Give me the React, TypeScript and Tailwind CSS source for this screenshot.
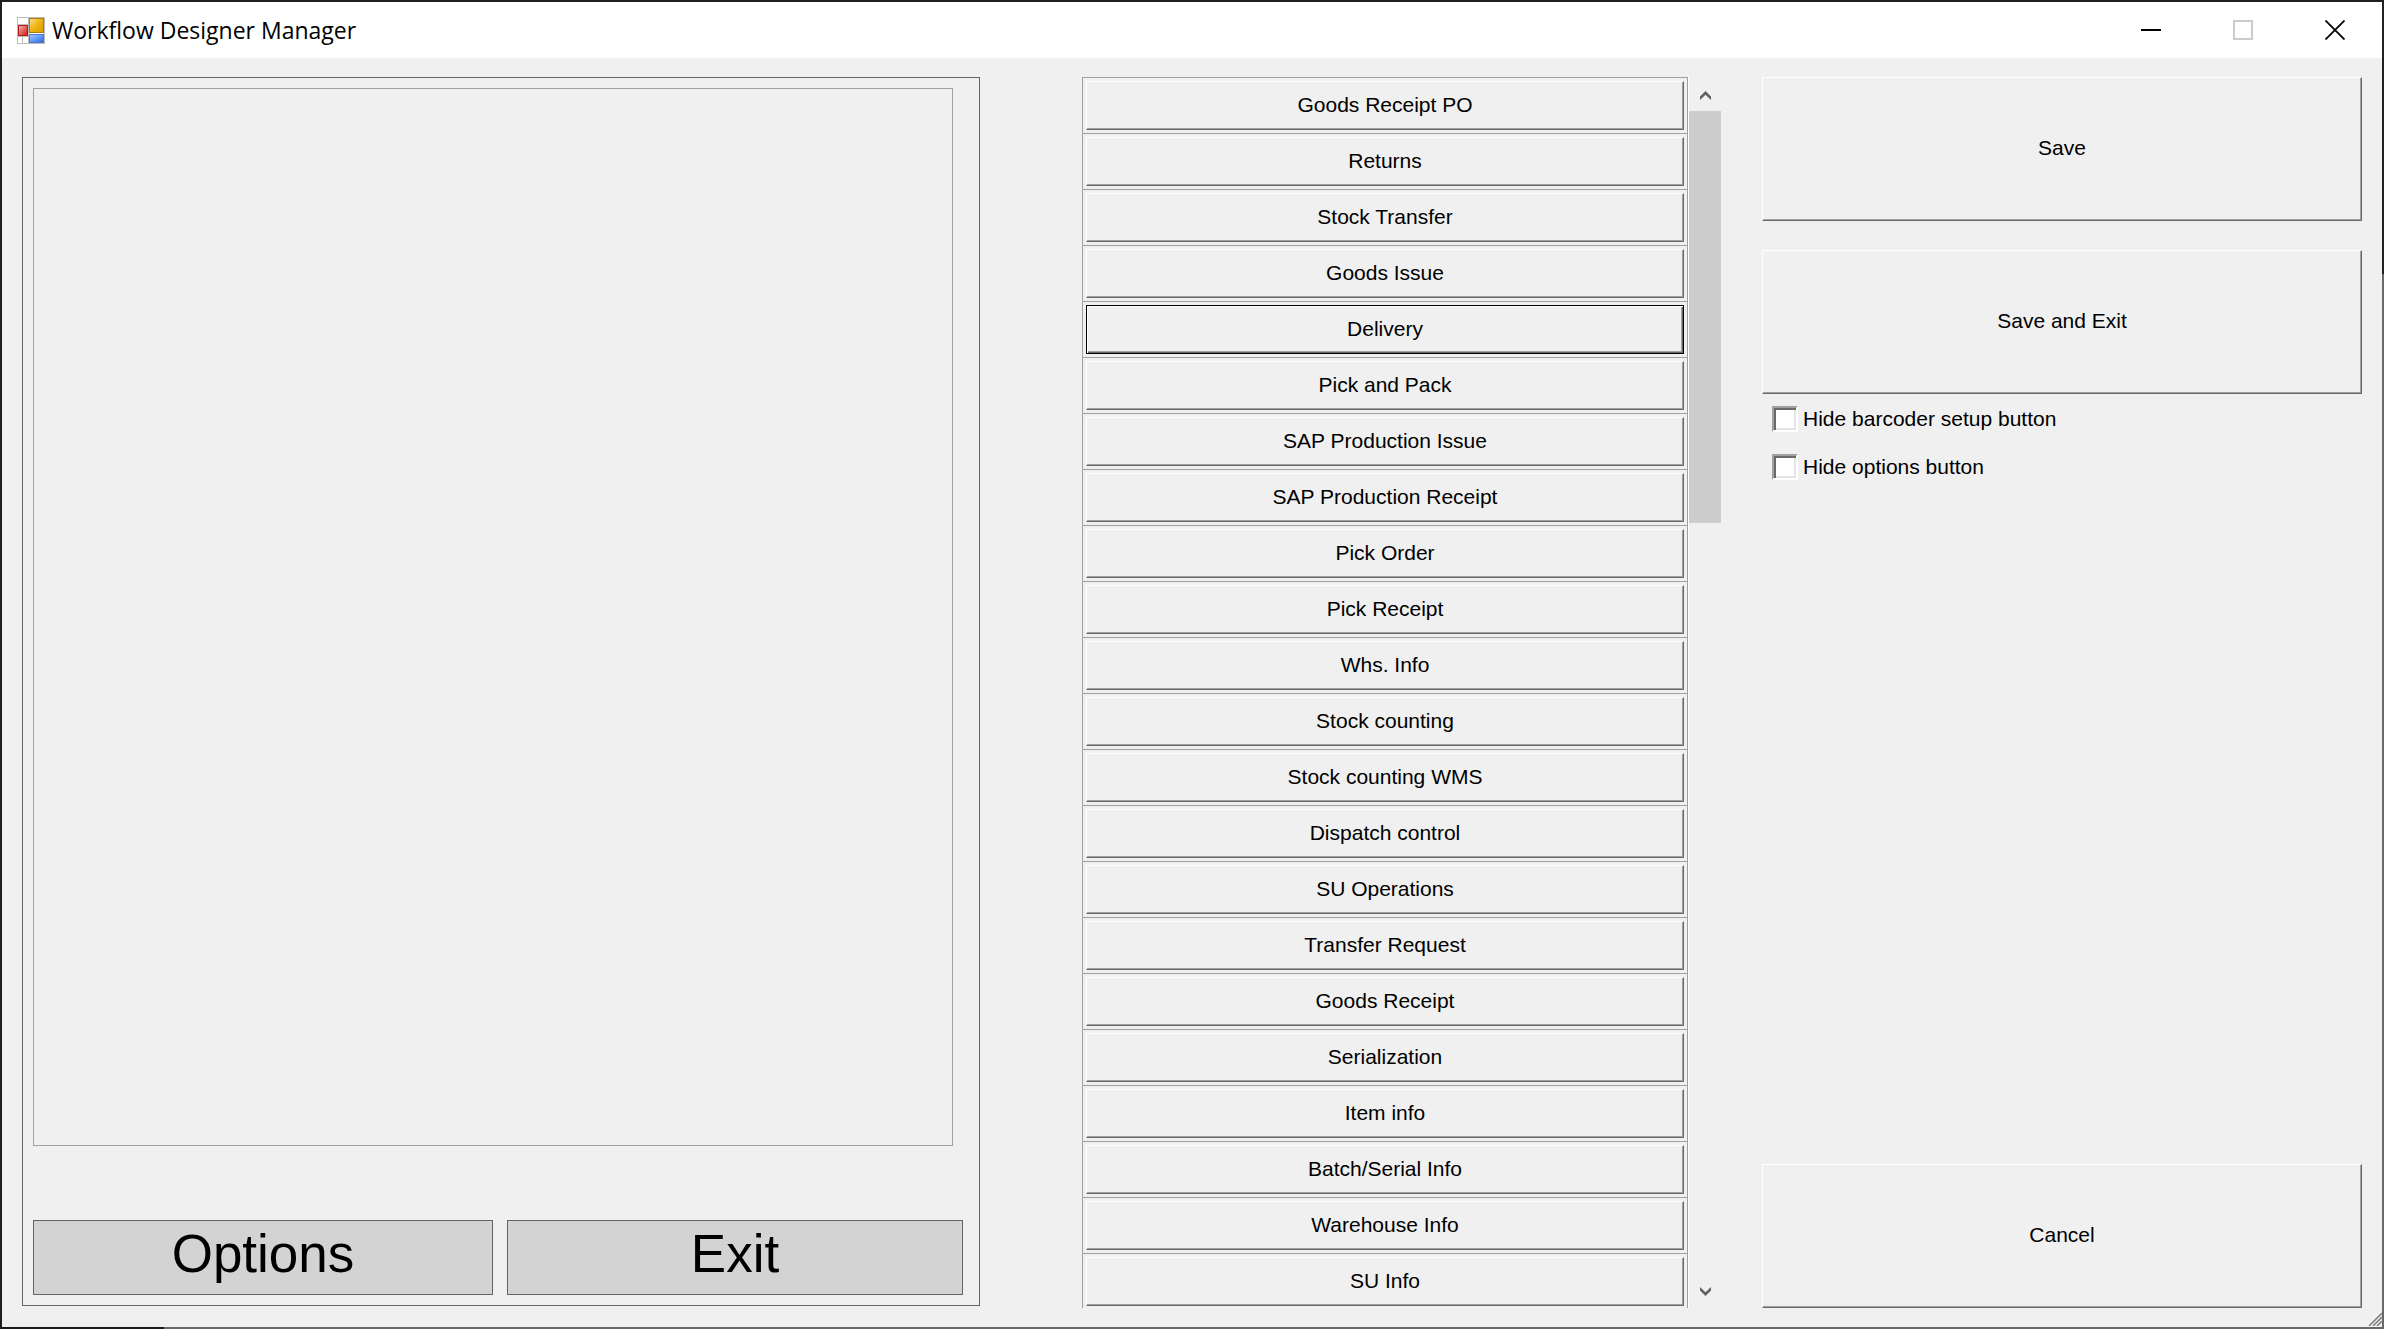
import { useState } from 'react';
import clsx from 'clsx';

const MODULES = [
  'Goods Receipt PO',
  'Returns',
  'Stock Transfer',
  'Goods Issue',
  'Delivery',
  'Pick and Pack',
  'SAP Production Issue',
  'SAP Production Receipt',
  'Pick Order',
  'Pick Receipt',
  'Whs. Info',
  'Stock counting',
  'Stock counting WMS',
  'Dispatch control',
  'SU Operations',
  'Transfer Request',
  'Goods Receipt',
  'Serialization',
  'Item info',
  'Batch/Serial Info',
  'Warehouse Info',
  'SU Info',
];

const RAISED =
  'border border-t-white border-l-white border-r-[#696969] border-b-[#696969] pb-[2px] shadow-[inset_-1px_-1px_0_#a0a0a0]';
const FOCUSED =
  'border border-black pb-[2px] shadow-[inset_1px_1px_0_#fff,inset_-1px_-1px_0_#696969,inset_-2px_-2px_0_#a0a0a0]';

function AppIcon() {
  return (
    <svg width="28" height="27" viewBox="0 0 28 27" aria-hidden="true">
      <defs>
        <linearGradient id="gold" x1="0" y1="0" x2="1" y2="1">
          <stop offset="0" stopColor="#fbe48a" />
          <stop offset="0.5" stopColor="#efb310" />
          <stop offset="1" stopColor="#dc9a00" />
        </linearGradient>
        <linearGradient id="red" x1="0" y1="0" x2="1" y2="1">
          <stop offset="0" stopColor="#f7b0a8" />
          <stop offset="1" stopColor="#c81a1a" />
        </linearGradient>
        <linearGradient id="blue" x1="0" y1="0" x2="1" y2="1">
          <stop offset="0" stopColor="#a5c8ff" />
          <stop offset="0.6" stopColor="#5a90fa" />
          <stop offset="1" stopColor="#2f62c8" />
        </linearGradient>
      </defs>
      <rect x="0.5" y="0.5" width="27" height="26" fill="#fff" stroke="#bdbdbd" />
      <path d="M11.5 0V27M0 19.5H12M5.5 20V27M0 7.5H12" stroke="#bdbdbd" fill="none" />
      <rect x="12.5" y="1.5" width="14" height="14" fill="url(#gold)" stroke="#a97c06" />
      <rect x="1.5" y="8.5" width="9" height="10" fill="url(#red)" stroke="#b01c1c" />
      <rect x="12.5" y="17.5" width="14" height="8" fill="url(#blue)" stroke="#4a78c8" />
    </svg>
  );
}

function TitleBar() {
  return (
    <header className="flex h-14 shrink-0 items-center bg-white pl-[15px] pr-px">
      <AppIcon />
      <h1 className="ml-[7px] flex-1 font-['Open_Sans',sans-serif] text-[23px] leading-8">
        Workflow Designer Manager
      </h1>
      <button aria-label="Minimize" className="flex h-14 w-[92px] items-center justify-center">
        <span className="h-[2px] w-5 bg-black" />
      </button>
      <button aria-label="Maximize" disabled className="flex h-14 w-[92px] items-center justify-center">
        <span className="size-5 border-2 border-[#cccccc]" />
      </button>
      <button aria-label="Close" className="flex h-14 w-[92px] items-center justify-center">
        <svg width="20" height="20" viewBox="0 0 20 20" stroke="#000" strokeWidth="1.8">
          <path d="M0.5 0.5L19.5 19.5M19.5 0.5L0.5 19.5" />
        </svg>
      </button>
    </header>
  );
}

function Preview() {
  return (
    <section className="mb-[2px] mr-[102px] flex flex-col border border-[#646464] p-[10px]">
      <div className="mr-4 flex-1 border border-[#a0a0a0]" />
      <div className="mr-[6px] mt-[74px] grid h-[75px] grid-cols-[460fr_456fr] gap-[14px] text-[53px] leading-[60px]">
        <button className="border border-[#646464] bg-[#d3d3d3] pb-2">Options</button>
        <button className="border border-[#646464] bg-[#d3d3d3] pb-2">Exit</button>
      </div>
    </section>
  );
}

function ModuleList() {
  const [active, setActive] = useState('Delivery');

  return (
    <section className="mr-[41px] flex min-h-0">
      <ul className="flex-1 overflow-hidden border-r border-white">
        {MODULES.map((name) => (
          <li key={name} className="h-14 border-x border-t border-[#a0a0a0] p-[3px]">
            <button
              onClick={() => setActive(name)}
              className={clsx('h-[49px] w-full', name === active ? FOCUSED : RAISED)}
            >
              {name}
            </button>
          </li>
        ))}
      </ul>
      {/* Scroll bar */}
      <div className="flex w-8 flex-col">
        <button aria-label="Scroll up" className="flex h-[34px] items-center justify-center pt-[2px]">
          <Chevron />
        </button>
        <div className="flex flex-1 flex-col">
          <div className="flex-[412] bg-[#cdcdcd]" />
          <div className="flex-[751]" />
        </div>
        <button aria-label="Scroll down" className="flex h-[34px] items-center justify-center">
          <Chevron down />
        </button>
      </div>
    </section>
  );
}

function Chevron({ down }: { down?: boolean }) {
  return (
    <svg width="11" height="9" viewBox="0 0 11 9" fill="#606060" className={clsx(down && 'rotate-180')}>
      <path d="M5.5 0L11 5.5V9L5.5 3.8L0 9V5.5Z" />
    </svg>
  );
}

function CheckOption({ label }: { label: string }) {
  return (
    <label className="flex items-center gap-[5px]">
      <input
        type="checkbox"
        className="size-[26px] appearance-none border-2 border-t-[#a0a0a0] border-l-[#a0a0a0] border-r-white border-b-white bg-white shadow-[inset_2px_2px_0_#696969,inset_-2px_-2px_0_#e3e3e3]"
      />
      {label}
    </label>
  );
}

function Actions() {
  return (
    <section className="flex flex-col">
      <button className={clsx('h-36', RAISED)}>Save</button>
      <button className={clsx('mt-[29px] h-36', RAISED)}>Save and Exit</button>
      <div className="ml-[10px] mt-3 flex flex-col gap-[22px] leading-[26px]">
        <CheckOption label="Hide barcoder setup button" />
        <CheckOption label="Hide options button" />
      </div>
      <button className={clsx('mt-auto h-36', RAISED)}>Cancel</button>
    </section>
  );
}

export default function App() {
  return (
    <div className="flex h-screen flex-col bg-[#696969] font-['Liberation_Sans',Arial,sans-serif] text-[21px] leading-6 text-black">
      <div className="h-[2px] shrink-0 bg-[#1d2020]" />
      <div className="flex min-h-0 flex-1">
        <div className="w-[2px] bg-[#1d1f20]" />
        <div className="relative flex min-w-0 flex-1 flex-col bg-[#f0f0f0]">
          <TitleBar />
          <main className="grid min-h-0 flex-1 grid-cols-[1060fr_680fr_600fr] grid-rows-[minmax(0,1fr)] px-5 py-[19px]">
            <Preview />
            <ModuleList />
            <Actions />
          </main>
          {/* Resize grip */}
          <svg className="absolute bottom-px right-0" width="14" height="14" viewBox="0 0 14 14" fill="none">
            <path d="M0 13.5L13.5 0M4 13.5L13.5 4M8 13.5L13.5 8" stroke="#fff" strokeWidth="1" />
            <path d="M1 14L14 1M5 14L14 5M9 14L14 9" stroke="#808080" strokeWidth="1.6" />
          </svg>
        </div>
        <div className="w-[2px]">
          <div className="h-[272px] bg-[#1f2222]" />
        </div>
      </div>
      <div className="h-[2px] shrink-0">
        <div className="h-[2px] w-[164px] bg-[#1a1a1a]" />
      </div>
    </div>
  );
}
